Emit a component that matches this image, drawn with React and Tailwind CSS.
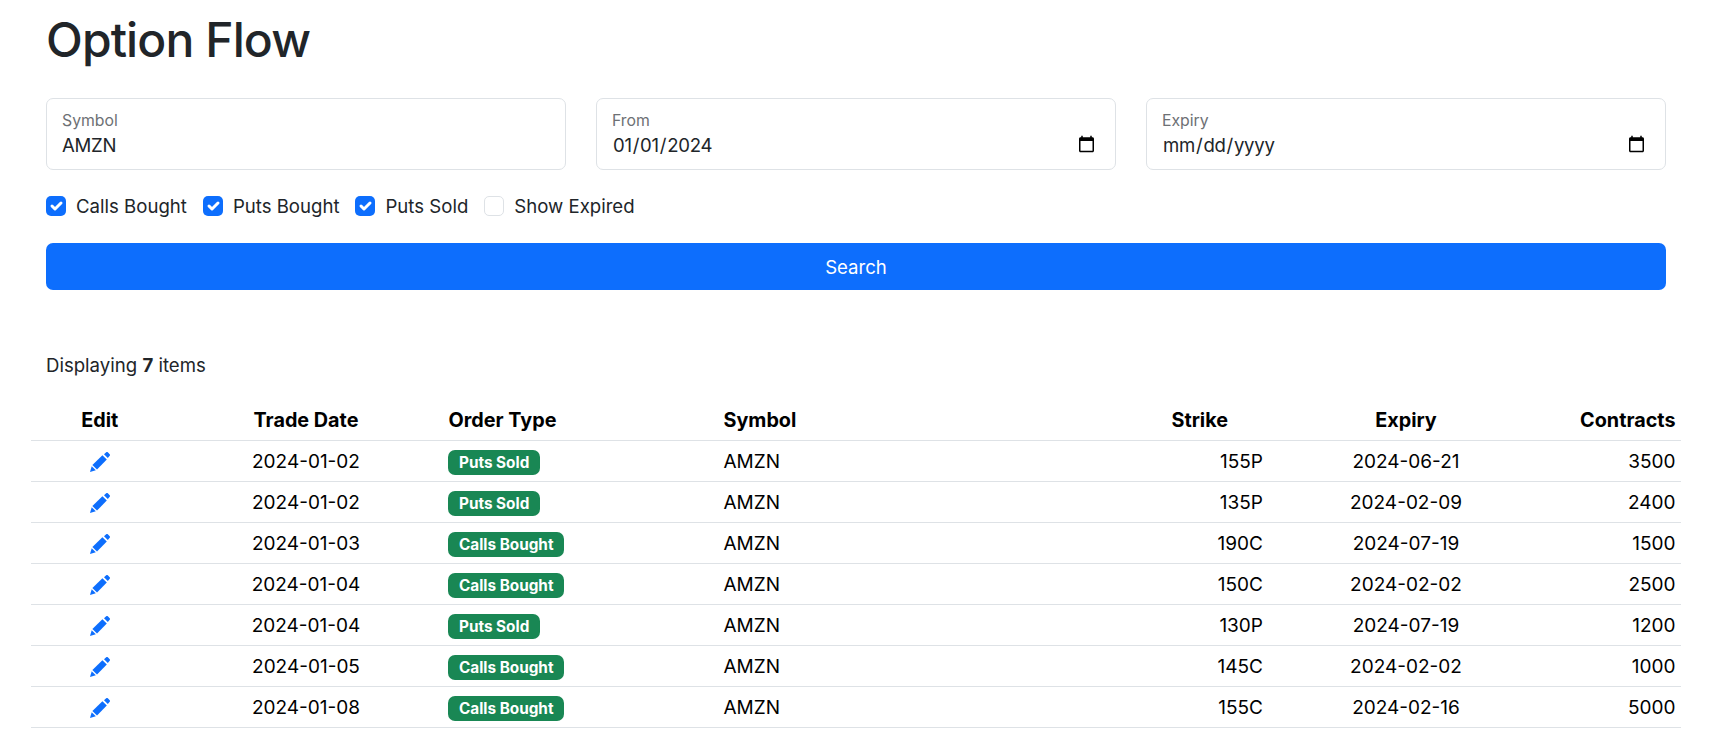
const rows = [
  ["2024-01-02", "Puts Sold", "AMZN", "155P", "2024-06-21", "3500"],
  ["2024-01-02", "Puts Sold", "AMZN", "135P", "2024-02-09", "2400"],
  ["2024-01-03", "Calls Bought", "AMZN", "190C", "2024-07-19", "1500"],
  ["2024-01-04", "Calls Bought", "AMZN", "150C", "2024-02-02", "2500"],
  ["2024-01-04", "Puts Sold", "AMZN", "130P", "2024-07-19", "1200"],
  ["2024-01-05", "Calls Bought", "AMZN", "145C", "2024-02-02", "1000"],
  ["2024-01-08", "Calls Bought", "AMZN", "155C", "2024-02-16", "5000"],
];

const filters = [
  ["Calls Bought", true],
  ["Puts Bought", true],
  ["Puts Sold", true],
  ["Show Expired", false],
];

const Pencil = () => (
  <svg viewBox="0 0 20 20" className="mx-auto w-[20px] h-[20px]" fill="#0d6efd">
    <path d="M14 2.2 16.2.3a1.2 1.2 0 0 1 1.6 0l1.9 1.9a1.2 1.2 0 0 1 0 1.6L17.8 6z" />
    <path d="M12.4 3.2 16.8 7.6 7 17.6 2.4 13z" />
    <path d="M1.7 14.2 5.8 18.3 0 20z" />
  </svg>
);

const Field = ({ label, type, value }) => (
  <label className="flex-1 h-[72px] border border-[#dee2e6] rounded-[7px] pl-[15px] pr-[17px] pt-[12px] flex flex-col bg-white">
    <span className="text-[15.8px] leading-[20px] text-[#6d7074]">{label}</span>
    <input
      type={type}
      defaultValue={value}
      className="w-full h-[29px] -mt-[1px] text-[18.6px] tracking-[-0.3px] text-[#212529] outline-none bg-transparent"
    />
  </label>
);

const Check = ({ label, checked }) => (
  <label className="flex items-center gap-[10px]">
    <span
      className={
        checked
          ? "w-[20px] h-[20px] rounded-[5px] bg-[#0d6efd] flex items-center justify-center"
          : "w-[20px] h-[20px] rounded-[5px] bg-white border border-[#dee2e6]"
      }
    >
      {checked && (
        <svg viewBox="0 0 20 20" className="w-[20px] h-[20px]" fill="none">
          <path d="m6 10 3 3 6-6" stroke="#fff" strokeWidth="3" strokeLinecap="round" strokeLinejoin="round" />
        </svg>
      )}
    </span>
    <span>{label}</span>
  </label>
);

export default function App() {
  return (
    <div className="font-['Inter',sans-serif] text-[18.6px] leading-[26px] text-[#212529] bg-white min-h-screen">
      <div className="pl-[46px] pr-[49px]">
        <h1 className="text-[48px] leading-[57px] font-medium tracking-[-0.9px] pt-[11px]">Option Flow</h1>

        <div className="flex gap-[30px] mt-[30px]">
          <Field label="Symbol" type="text" value="AMZN" />
          <Field label="From" type="date" value="2024-01-01" />
          <Field label="Expiry" type="date" />
        </div>

        <div className="flex gap-[16px] mt-[20px] h-[32px] items-center">
          {filters.map(([label, checked]) => (
            <Check key={label} label={label} checked={checked} />
          ))}
        </div>

        <button className="w-full h-[47px] mt-[21px] rounded-[7px] bg-[#0d6efd] text-white">Search</button>

        <p className="mt-[62px]">
          Displaying <b>7</b> items
        </p>
      </div>

      <div className="pl-[31px] pr-[34px] mt-[22px]">
        <table className="w-full table-fixed text-black text-[19px]">
          <thead>
            <tr className="h-[40px] border-b border-[#dee2e6] text-[19.8px]">
              <th className="w-1/12 text-center font-bold">Edit</th>
              <th className="w-2/12 text-center font-bold">Trade Date</th>
              <th className="w-2/12 text-left font-bold px-[5px]">Order Type</th>
              <th className="w-3/12 text-left font-bold px-[5px]">Symbol</th>
              <th className="w-1/12 text-center font-bold">Strike</th>
              <th className="w-2/12 text-center font-bold">Expiry</th>
              <th className="w-1/12 text-right font-bold px-[5.5px]">Contracts</th>
            </tr>
          </thead>
          <tbody>
            {rows.map((row, i) => (
              <tr key={i} className="h-[41px] border-b border-[#dee2e6]">
                <td className="pt-[2px]">
                  <Pencil />
                </td>
                <td className="text-center pt-[2px]">{row[0]}</td>
                <td className="px-[5px] pt-[3px]">
                  <span className="inline-block h-[25px] px-[10.5px] rounded-[7px] bg-[#198754] text-white text-[15.3px] leading-[25px] font-bold align-middle">
                    {row[1]}
                  </span>
                </td>
                <td className="px-[5px] pt-[2px]">{row[2]}</td>
                <td className="text-right px-[5.5px] pt-[2px]">{row[3]}</td>
                <td className="text-center pt-[2px]">{row[4]}</td>
                <td className="text-right px-[5.5px] pt-[2px]">{row[5]}</td>
              </tr>
            ))}
          </tbody>
        </table>
      </div>
    </div>
  );
}
